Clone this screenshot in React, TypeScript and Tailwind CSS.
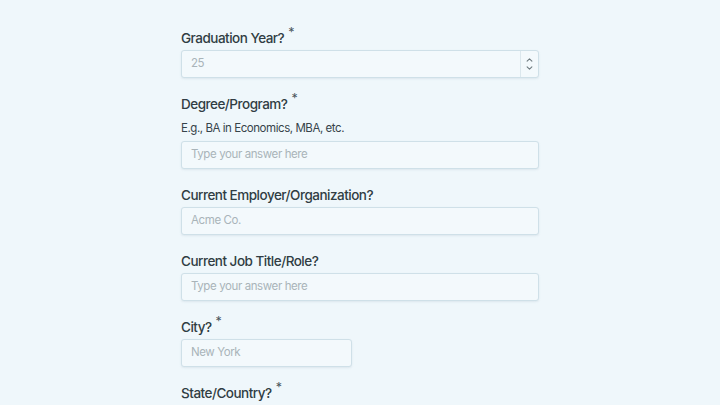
import React from 'react';

const font = { fontFamily: 'Inter, "Noto Sans", sans-serif' };

function Label({ text, required }: { text: string; required?: boolean }) {
  return (
    <div className="h-5 leading-5 text-[13.5px] font-medium text-[#303d43] tracking-[-0.5px] flex">
      <span>{text}</span>
      {required && <span className="ml-[4px] text-[12.5px] leading-[12px] font-normal text-[#4a565b] -mt-[1px]">*</span>}
    </div>
  );
}

function TextInput({ placeholder, narrow }: { placeholder: string; narrow?: boolean }) {
  return (
    <div
      className={`${narrow ? 'w-[171px]' : 'w-full'} h-7 mt-[2px] rounded-[3px] border border-[#cfe0e8] bg-[#f3f9fc] shadow-[0_1px_2px_rgba(120,150,165,0.15)] flex items-center px-[9px] text-[11.5px] tracking-[-0.4px] text-[#a9b4b9]`}
    >
      {placeholder}
    </div>
  );
}

export default function App() {
  return (
    <div className="min-h-[405px] w-full bg-[#eff7fb]" style={font}>
      <div className="w-[358px] mx-auto pt-7 flex flex-col">
        <Label text="Graduation Year?" required />
        <div className="w-full h-7 mt-[2px] rounded-[3px] border border-[#cfe0e8] bg-[#f3f9fc] shadow-[0_1px_2px_rgba(120,150,165,0.15)] flex items-center text-[11.5px] tracking-[-0.4px] text-[#a9b4b9]">
          <span className="flex-1 px-[9px]">25</span>
          <div className="w-[18px] h-full border-l border-[#dbe7ed] flex flex-col items-center justify-center gap-[4px]">
            <svg width="7" height="4" viewBox="0 0 8 5" fill="none" stroke="#6b777c" strokeWidth="1.3" strokeLinecap="round" strokeLinejoin="round">
              <path d="M1 4L4 1L7 4" />
            </svg>
            <svg width="7" height="4" viewBox="0 0 8 5" fill="none" stroke="#6b777c" strokeWidth="1.3" strokeLinecap="round" strokeLinejoin="round">
              <path d="M1 1L4 4L7 1" />
            </svg>
          </div>
        </div>

        <div className="mt-4">
          <Label text="Degree/Program?" required />
          <div className="mt-[5px] h-[18px] leading-[18px] text-[11.5px] tracking-[-0.45px] text-[#36434a]">E.g., BA in Economics, MBA, etc.</div>
          <div className="mt-[4px]">
            <TextInput placeholder="Type your answer here" />
          </div>
        </div>

        <div className="mt-4">
          <Label text="Current Employer/Organization?" />
          <TextInput placeholder="Acme Co." />
        </div>

        <div className="mt-4">
          <Label text="Current Job Title/Role?" />
          <TextInput placeholder="Type your answer here" />
        </div>

        <div className="mt-4">
          <Label text="City?" required />
          <div className="mt-[1px]">
            <TextInput placeholder="New York" narrow />
          </div>
        </div>

        <div className="mt-4">
          <Label text="State/Country?" required />
        </div>
      </div>
    </div>
  );
}
